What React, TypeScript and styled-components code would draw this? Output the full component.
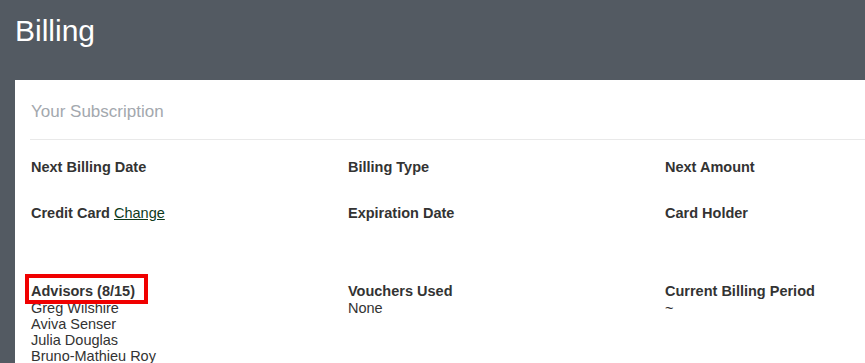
import React from "react";
import styled, { createGlobalStyle } from "styled-components";

const GlobalStyle = createGlobalStyle`
  html, body {
    margin: 0;
    padding: 0;
    background: #535a62;
    overflow: hidden;
  }
  body {
    font-family: "Liberation Sans", Arial, Helvetica, sans-serif;
    color: #333;
  }
`;

const Page = styled.div`
  width: 1013px;
  min-height: 363px;
  padding: 13px 0 0 15px;
  box-sizing: border-box;
  background: #535a62;
`;

const Title = styled.h1`
  margin: 0 0 31px 0;
  font-size: 30px;
  line-height: 36px;
  font-weight: 400;
  color: #ffffff;
`;

const Card = styled.section`
  width: 983px;
  background: #ffffff;
  min-height: 300px;
`;

const CardHeader = styled.header`
  margin: 0 0 0 15px;
  padding: 21px 0 16px 1px;
  font-size: 17px;
  line-height: 22px;
  color: #a3a8ae;
  border-bottom: 1px solid #e9e9e9;
`;

const CardBody = styled.div`
  padding: 18px 16px 0 16px;
`;

const Row = styled.div<{ $space: number }>`
  display: grid;
  grid-template-columns: repeat(3, 317px);
  margin-bottom: ${(p) => p.$space}px;
`;

const Field = styled.div`
  display: flex;
  flex-direction: column;
`;

const Label = styled.div`
  font-size: 14.5px;
  line-height: 18px;
  font-weight: 700;
  color: #333;
`;

const Highlight = styled.span`
  position: relative;
  &::after {
    content: "";
    position: absolute;
    left: -6px;
    right: -13px;
    top: -9px;
    bottom: -5px;
    border: 4px solid #f00000;
  }
`;

const Value = styled.div`
  font-size: 14.5px;
  line-height: 16px;
  color: #333;
`;

const Link = styled.a`
  font-weight: 400;
  color: #0e3a1b;
  text-decoration: underline;
  cursor: pointer;
`;

const advisors = ["Greg Wilshire", "Aviva Senser", "Julia Douglas", "Bruno-Mathieu Roy"];

export default function App() {
  return (
    <>
      <GlobalStyle />
      <Page>
        <Title>Billing</Title>
        <Card>
          <CardHeader>Your Subscription</CardHeader>
          <CardBody>
            <Row $space={28}>
              <Field><Label>Next Billing Date</Label></Field>
              <Field><Label>Billing Type</Label></Field>
              <Field><Label>Next Amount</Label></Field>
            </Row>
            <Row $space={60}>
              <Field>
                <Label>
                  Credit Card <Link>Change</Link>
                </Label>
              </Field>
              <Field><Label>Expiration Date</Label></Field>
              <Field><Label>Card Holder</Label></Field>
            </Row>
            <Row $space={0}>
              <Field>
                <Label>
                  <Highlight>Advisors (8/15)</Highlight>
                </Label>
                {advisors.map((a) => (
                  <Value key={a}>{a}</Value>
                ))}
              </Field>
              <Field>
                <Label>Vouchers Used</Label>
                <Value>None</Value>
              </Field>
              <Field>
                <Label>Current Billing Period</Label>
                <Value>~</Value>
              </Field>
            </Row>
          </CardBody>
        </Card>
      </Page>
    </>
  );
}
